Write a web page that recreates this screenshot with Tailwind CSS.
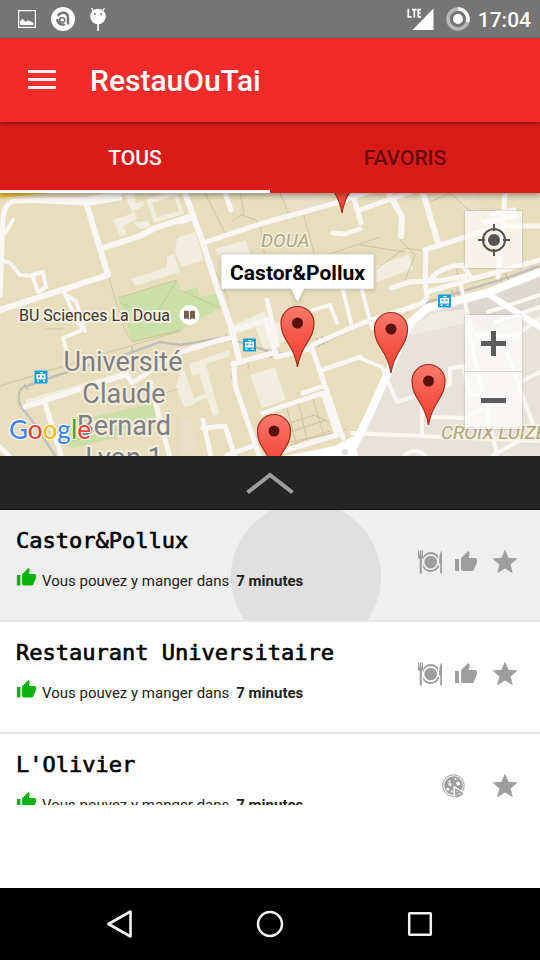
<!DOCTYPE html>
<html lang="fr">
<head>
<meta charset="utf-8">
<meta name="viewport" content="width=device-width, initial-scale=1">
<title>RestauOuTai</title>
<script src="https://cdn.jsdelivr.net/npm/@tailwindcss/browser@4"></script>
</head>
<body class="flex min-h-screen flex-col bg-white font-[Roboto,sans-serif] text-black">

<svg class="hidden" aria-hidden="true">
  <symbol id="thumb" viewBox="0 0 24 24"><path d="M1 21h4V9H1v12zm22-11c0-1.1-.9-2-2-2h-6.31l.95-4.57.03-.32c0-.41-.17-.79-.44-1.06L14.17 1 7.59 7.59C7.22 7.95 7 8.45 7 9v10c0 1.1.9 2 2 2h9c.83 0 1.54-.5 1.84-1.22l3.02-7.05c.09-.23.14-.47.14-.73z"/></symbol>
  <symbol id="star" viewBox="0 0 24 24"><path d="M12 17.27 18.18 21l-1.64-7.03L22 9.24l-7.19-.61L12 2 9.19 8.63 2 9.24l5.46 4.73L5.82 21z"/></symbol>
  <symbol id="plate" viewBox="0 0 24 24">
    <path d="M0 .5h1.200v5h.6v-5h1.300v5h.6v-5h1.300V7c0 1.200-.5 1.800-1.200 2.200V23.500H1.700V9.200C.6 8.800 0 8.200 0 7z"/>
    <path d="M24 .5v23h-1.800V13.500h-1.100C21.100 8 21.600 2.500 24 .5z"/>
    <circle cx="12.700" cy="12" r="6.300"/>
    <path d="M5.300 6.300C7 3.500 9.800 2 12.700 2c2.900 0 5.600 1.300 7.500 3.700l-.6 3.200A7.500 7.500 0 0 0 5.300 10zM5.300 14a7.500 7.500 0 0 0 14.300 1.300h1.300v2A9.900 9.900 0 0 1 12.700 22c-3 0-5.700-1.500-7.400-4z"/>
  </symbol>
  <symbol id="pizza" viewBox="0 0 24 24">
    <path fill="none" stroke="currentColor" stroke-width="1" d="M20.500 17.300A10.700 10.700 0 1 0 12 22.300"/>
    <path fill-rule="evenodd" d="M11.500 2.300a9.300 9.300 0 0 1 7.900 14.200L11.500 11.600v9.300a9.300 9.300 0 0 1 0-18.600zM12.500 4.200v1.600h1.800V4.200zM6.500 6.500v1.800h2V6.500zM15.300 7.600l-1.300 1.400.8 2 2 .5 1.500-1.200-.8-2.100zM6 9.600l.8 1.800 2 .8.900-1.600-1-1.500zM4.300 14v2.500h2.800V14zM8.700 16.500v2h1.800v-2z"/>
    <path fill-rule="evenodd" d="M12.800 13.800l8.700 5.400c-1.700 2.700-4.700 4.200-8.200 4.200zM14.500 16.500v1.600h1.600zM16 19.300v1.300h1.500v-1.300zM18.300 20.600l1.500-1.200-1-.5zM14.200 20.300v1.200h1.200z"/>
  </symbol>
</svg>

<div class="flex h-[38px] shrink-0 items-center bg-[#757575] px-[9px] text-white">
  <div class="flex flex-1 items-center gap-[15px] pl-[9px]">
    <svg class="size-[18px]" viewBox="0 0 18 18" aria-label="Image"><path fill="none" stroke="#fff" stroke-width="1.200" d="M.6.600h16.800v16.800H.6z"/><path fill="#fff" d="M2 15v-3.500l2.500-2.800 3 3.300 2-1.500 2.500.5 3.500 2V15z"/></svg>
    <svg class="size-6" viewBox="0 0 24 24" aria-label="Avast"><circle cx="12" cy="12" r="12" fill="#fff"/><path fill="none" stroke="#757575" stroke-width="2.400" d="M6.800 8.800Q9 5.600 12.500 5.800 17 6.200 17 11v6.500M13.600 16.800Q12.300 18 10.600 17.500 6.200 16.300 6.300 12"/><ellipse cx="11.200" cy="13" rx="2.600" ry="2.200" fill="none" stroke="#757575" stroke-width="1.500"/></svg>
    <svg class="h-6 w-4" viewBox="0 0 16 24" aria-label="Android"><path fill="none" stroke="#fff" stroke-width="1.300" d="M1.500 1l2 3M14.500 1l-2 3"/><circle cx="8" cy="9.500" r="7.800" fill="#fff"/><circle cx="4.800" cy="7" r="1" fill="#757575"/><circle cx="11.200" cy="7" r="1" fill="#757575"/><path fill="#fff" d="M7.200 17h1.700v7H7.200z"/></svg>
  </div>
  <svg class="mr-3 h-6 w-7" viewBox="0 0 28 24" aria-label="LTE"><path fill="#fff" d="M27.500 1.500v21.500h-21z"/><path fill="none" stroke="#fff" stroke-width="1.700" d="M2.300 1.800v8h3.200M6 2.600h4.600M8.300 2.600v8M15 2.600h-2.700v7.200H15M12.300 6h2.400"/></svg>
  <svg class="mr-2 size-6" viewBox="0 0 24 24" aria-label="Batterie"><circle cx="12" cy="12" r="10" fill="none" stroke="#b8b8b8" stroke-width="3.500"/><path fill="none" stroke="#fff" stroke-width="3.500" d="M12 2a10 10 0 0 1 9.500 13"/><circle cx="12" cy="12" r="5" fill="#fff"/></svg>
  <span class="pt-px text-[21px] font-medium leading-6">17:04</span>
</div>

<header class="relative z-10 flex h-[84px] shrink-0 items-center bg-[#f12b2a] px-7 text-white shadow-[0_1px_4px_rgba(0,0,0,0.45)]">
  <button type="button" class="mr-[34px]" aria-label="Menu"><svg class="h-5 w-7" viewBox="0 0 28 20"><path fill="#fff" fill-opacity=".93" d="M0 0h28v3H0zM0 8h28v3H0zM0 16h28v3H0z"/></svg></button>
  <h1 class="pt-[2px] text-[30px] font-medium leading-9">RestauOuTai</h1>
</header>

<nav class="relative z-[5] flex h-[71px] shrink-0 bg-[#d91b19] text-[21px] font-medium shadow-[0_2px_6px_rgba(0,0,0,0.4)]">
  <a href="#tous" class="flex flex-1 items-center justify-center border-b-3 border-white pt-[5px] text-white">TOUS</a>
  <a href="#favoris" class="flex flex-1 items-center justify-center pt-[2px] text-[#660c0b]">FAVORIS</a>
</nav>

<section class="relative h-[263px] shrink-0 overflow-hidden bg-[#e8ddbd]" aria-label="Carte">
  <svg class="block size-full" viewBox="0 193 540 263" preserveAspectRatio="xMidYMid slice">
    <defs>
      <linearGradient id="red" x1="0" y1="0" x2="0" y2="1"><stop offset="0" stop-color="#fa7a6c"/><stop offset=".5" stop-color="#f5574a"/><stop offset="1" stop-color="#f0402f"/></linearGradient>
      <g id="pin"><path fill="url(#red)" stroke="#a8281c" stroke-width="1.200" d="M0 0C-1.500-11-5-17-9.500-24-13-29.500-16.500-35-16.500-44a16.500 16.500 0 0 1 33 0C16.500-35 13-29.500 9.500-24 5-17 1.500-11 0 0z"/><circle cy="-44" r="5.500" fill="#5a120c"/></g>
      <g id="tram"><rect x="-6.500" y="-6.500" width="13" height="13" rx="1" fill="#149fec"/><path fill="#fff" d="M-4.500-3h9v5.500h-9zM-1-5h3v1.500h-3zM-4 3.500h2V5h-2zM2 3.500h2V5H2z"/><path fill="#149fec" d="M-3-1.500h2v1.800h-2zM1-1.500h2v1.800H1z"/></g>
    </defs>

    <path fill="#e7e3dc" d="M350 456L410 323 430 306 488 291 540 270V456z"/>
    <path fill="#ddd8d1" d="M440 312l50-16 50-20v30l-50 25z"/>
    <path fill="#efece5" d="M412 326l25-14 32-3-3 14-55 12z"/>
    <path fill="#f2c83c" d="M0 192h58L0 198z"/>
    <path fill="#cbdfa8" d="M118 298l59-18 4 12 16-5 3 10 17-4 4 15-33 17-8 7-48 10z"/>
    <path fill="#cbdfa8" d="M58 428l22-8 73-17 5 25-86 20-14-8z"/>
    <path fill="#ebdfca" d="M284 193l32 0 8 12-34 7zM180 420l10-2 8 30-18 6zM455 193h20l8 20-18 4z"/>

    <g fill="#f1eee0">
      <path d="M113 220l12-4 10-4 2 7-14 7 4 8-7 2zM124 194l10-1 2 10 7-2 1 5-12 6zM132 222l17-1 1 6-10 2z"/>
      <path fill-rule="evenodd" d="M146 199l30-9 8 24-30 9zM152 203l22-7 5 15-22 6z"/>
      <path d="M132 279l35-12 0-10 7-3 6 18-45 14zM177 238l18-6 9 28-22 7-7-14zM215 249l31-9 4 14-29 5zM180 372l4-2 10 28 14-5 1 3-24 12-9-20zM189 364l40-14 1 6-24 8 13 50-6 2-14-42-7 2zM250 375l25-8 11 33-24 8zM233 325l32-14 12 35-13 3-9-22-22 8zM375 267l34-13 4 15-36 13z"/>
      <path d="M25 400l98-28 2 6-99 28zM270 325l12-4 8 18-10 4z"/>
    </g>

    <g fill="none" stroke="#c9bd98" stroke-width=".8">
      <path d="M108 275l16 53 8 14 48-12M118 298l58-18M120 303l35 13 22-36M0 386l90-28 90-27M45 329h18M180 290l40 18M165 393l13-4M60 445l90-25"/>
      <path d="M205 193l20 40M240 193l4 20-12 8M242 215l14 5 5 10 8 55M303 213l12 43M280 193l10 25M375 270l30-22 20 3M400 240l15 15-10 25M360 245l45 7M430 202l20-9 20 18 40 20M327 255l53-18M216 272l13 28"/>
      <path d="M231 375l28 80M242 360q8 0 6 10M286 405l12 45M298 400l10 45M312 396l12 40M284 425l30-10 18 8M290 445l40-14M290 432l36-12M265 447l60-12 22-6M456 265l4 20 35-8"/>
    </g>

    <g fill="none" stroke="#c3bfb8" stroke-width="2.500">
      <path d="M58 460L35 425 20 405Q16 391 24 387L67 372 130 353 160 342 180 345 220 338 245 343 275 354 290 353 322 343 360 325 403 310 460 292 500 280 540 266"/>
      <path stroke-width="1.500" d="M24 384l4 6M132 346v7M226 334l-1 8M271 350v8M317 338l2 9M322 336l2 9M407 306v8M452 290l2 8M457 288l2 8M498 275l4 8M505 273l4 8M532 266l2 8"/>
    </g>

    <g fill="none" stroke="#f8f7f3" stroke-width="5" stroke-linejoin="round" stroke-linecap="round">
      <path d="M0 295L3 218Q4 203 16 201L50 200 85 200 120 193M40 201l50 2 30-5"/>
      <path d="M86 202L108 275 0 310M103 248L140 236 155 228 192 216" stroke-width="6"/>
      <path d="M185 193L203 243 217 287 230 323 240 362" stroke-width="6"/>
      <path d="M203 243L263 223 340 202 370 191M180 222l10-3M360 210L410 192M225 193l6 17M353 195l8 28M333 233l12 1 15-5"/>
      <path d="M390 195L402 217 401 236M423 193L438 243" stroke-width="6"/>
      <path d="M425 250L487 230 500 226 540 226M426 251L425 280 427 297Q425 303 415 306L360 324 312 345M505 193L498 277M492 214l22-4M485 222l30-6"/>
      <path d="M391 288L410 282 445 280 465 276M430 280Q440 266 463 265L470 276M427 292L497 272 540 260"/>
      <path d="M0 260L10 263 20 275 32 276M32 275L43 272 46 287 38 292zM0 237l7-7 6-10M63 290L78 323M68 296l8 5 9 30M80 323l2 7-19 8 4 14" stroke-width="4"/>
      <path d="M25 407L127 374 132 383 180 352 220 340 230 338M45 403L62 458M150 382L170 458M0 447l10 10"/>
      <path d="M267 300L277 345M267 325L276 355M233 330L267 320M276 357L312 348 343 438M233 364L276 352M234 363L235 385 260 458M322 370L360 357M263 413L323 393 337 435 280 452M303 393l18-6M203 420l8 37M203 428l22-2 10 30M227 455l26-9"/>
      <path d="M313 310L330 305 337 323M343 290L352 327M362 290l10 38M298 330l12-4" stroke-width="4"/>
      <path d="M460 282l12 50M360 358L382 367 397 402 450 385 450 368 463 366 470 395 482 395M422 403L422 433M352 433L540 441M432 417L467 418 493 402M467 325L497 455M503 342L535 430M475 335L517 335 540 318M520 382L540 372M493 455L540 430M405 455q10-8 20 0M488 312l52-17M495 322l45-15" stroke-width="4"/>
    </g>
    <path fill="none" stroke="#fff" stroke-width="8" d="M346 462L370 413 410 323 427 308 487 293 545 270"/>
    <path fill="none" stroke="#fff" stroke-width="6" d="M488 294L545 330"/>
    <path fill="#fff" d="M285 456l50-10 18-10 5 20z"/><circle cx="345" cy="452" r="3" fill="#ddd"/>

    <use href="#tram" x="41" y="377"/><use href="#tram" x="249.500" y="345"/><use href="#tram" x="444.500" y="301"/>

    <g fill="#7c7f84" stroke="#f3ecd8" stroke-width="4" stroke-linejoin="round" paint-order="stroke" text-anchor="middle" class="font-[Roboto,sans-serif] text-[27px]">
      <text x="123" y="371">Université</text><text x="124" y="403">Claude</text><text x="124" y="435">Bernard</text><text x="124" y="467">Lyon 1</text>
    </g>
    <text x="19" y="321" fill="#3c3630" stroke="#f5efdf" stroke-width="4" paint-order="stroke" class="font-[Roboto,sans-serif] text-[16px]">BU Sciences La Doua</text>
    <circle cx="189.500" cy="315" r="10" fill="#fff"/><path fill="#795b50" d="M184 311q3-1 5 .5v8q-2-1.500-5-.5zM195 311q-3-1-5 .5v8q2-1.500 5-.5z"/>
    <g fill="#b0a380" stroke="#f5efdf" stroke-width="3" paint-order="stroke" class="font-[Roboto,sans-serif] italic">
      <text x="261" y="247" class="text-[19px]">DOUA</text><text x="441" y="439" class="text-[19px]">CROIX LUIZET</text>
    </g>

    <use href="#pin" x="342" y="213"/><use href="#pin" x="297.500" y="367"/><use href="#pin" x="391" y="373"/><use href="#pin" x="428.500" y="425"/><use href="#pin" x="274" y="475"/>

    <path class="drop-shadow-sm" fill="#fff" stroke="#c9c4b4" stroke-width=".6" d="M221 254h153v35h-70l-6.500 14-6.500-14h-70z"/>
    <text x="297.500" y="280" text-anchor="middle" class="font-[Roboto,sans-serif] text-[21px] font-bold">Castor&amp;Pollux</text>

    <text x="9" y="439" stroke="#fff" stroke-width="2" paint-order="stroke" class="font-[Lato,sans-serif] text-[26px] font-medium"><tspan fill="#4285f4">G</tspan><tspan fill="#ea4335">o</tspan><tspan fill="#fbbc05">o</tspan><tspan fill="#4285f4">g</tspan><tspan fill="#34a853">l</tspan><tspan fill="#ea4335">e</tspan></text>
  </svg>

  <div class="absolute inset-y-0 right-[18px] flex w-[57px] flex-col justify-between pb-[27px] pt-[18px]">
    <button type="button" aria-label="Ma position" class="flex h-[57px] items-center justify-center bg-white/65 shadow-[0_0_2px_rgba(0,0,0,0.3)]">
      <svg class="size-8" viewBox="0 0 32 32" fill="none" stroke="#555" stroke-width="2"><circle cx="16" cy="16" r="11"/><path d="M16 0v7M16 25v7M0 16h7M25 16h7"/><circle cx="16" cy="16" r="6" fill="#555" stroke="none"/></svg>
    </button>
    <div class="flex flex-col divide-y divide-[#d8d6d2] bg-white/70 shadow-[0_0_2px_rgba(0,0,0,0.3)]">
      <button type="button" aria-label="Zoom avant" class="flex h-[57px] items-center justify-center"><svg class="size-[25px]" viewBox="0 0 25 25"><path fill="#5c5c5c" d="M10 0h5v10h10v5H15v10h-5V15H0v-5h10z"/></svg></button>
      <button type="button" aria-label="Zoom arrière" class="flex h-[57px] items-center justify-center"><svg class="size-[25px]" viewBox="0 0 25 25"><path fill="#5c5c5c" d="M0 10h25v5H0z"/></svg></button>
    </div>
  </div>
</section>

<button type="button" aria-label="Agrandir la liste" class="flex h-[54px] w-full shrink-0 items-center justify-center border-b border-[#111] bg-[#242424]">
  <svg class="h-6 w-12" viewBox="0 0 48 24"><path fill="none" stroke="#9e9e9e" stroke-width="4" d="M1.500 21.500L24 4l22.500 17.500"/></svg>
</button>

<ul class="max-h-[295px] shrink-0 overflow-hidden">
  <li class="relative flex h-28 overflow-hidden border-b-2 border-[#e6e6e6] bg-[#efefef] pl-4 pr-5">
    <span class="absolute -top-2 left-[231px] size-[150px] rounded-full bg-[#e0e0e0]"></span>
    <div class="relative flex-1 pt-[17px]">
      <h2 class="font-['DejaVu_Sans_Mono',monospace] text-[22px] leading-7 [-webkit-text-stroke:0.03em_#000]">Castor&amp;Pollux</h2>
      <p class="mt-[14px] flex items-center text-[15px] leading-6 text-[#222]"><svg class="mr-[5px] size-[21px] -translate-y-1 fill-[#0bb30b]"><use href="#thumb"/></svg>Vous pouvez y manger dans<b class="ml-[7px]">7 minutes</b></p>
    </div>
    <div class="relative flex items-center gap-3 self-start fill-[#9e9e9e] pt-[37px] text-[#9e9e9e]">
      <svg class="size-6"><use href="#plate"/></svg><svg class="size-6"><use href="#thumb"/></svg>
      <button type="button" aria-label="Ajouter aux favoris"><svg class="block size-[30px] fill-[#9e9e9e]"><use href="#star"/></svg></button>
    </div>
  </li>
  <li class="relative flex h-28 overflow-hidden border-b-2 border-[#e6e6e6] pl-4 pr-5">
    <div class="relative flex-1 pt-[17px]">
      <h2 class="font-['DejaVu_Sans_Mono',monospace] text-[22px] leading-7 [-webkit-text-stroke:0.03em_#000]">Restaurant Universitaire</h2>
      <p class="mt-[14px] flex items-center text-[15px] leading-6 text-[#222]"><svg class="mr-[5px] size-[21px] -translate-y-1 fill-[#0bb30b]"><use href="#thumb"/></svg>Vous pouvez y manger dans<b class="ml-[7px]">7 minutes</b></p>
    </div>
    <div class="relative flex items-center gap-3 self-start fill-[#9e9e9e] pt-[37px] text-[#9e9e9e]">
      <svg class="size-6"><use href="#plate"/></svg><svg class="size-6"><use href="#thumb"/></svg>
      <button type="button" aria-label="Ajouter aux favoris"><svg class="block size-[30px] fill-[#9e9e9e]"><use href="#star"/></svg></button>
    </div>
  </li>
  <li class="relative flex h-28 overflow-hidden pl-4 pr-5">
    <div class="relative flex-1 pt-[17px]">
      <h2 class="font-['DejaVu_Sans_Mono',monospace] text-[22px] leading-7 [-webkit-text-stroke:0.03em_#000]">L'Olivier</h2>
      <p class="mt-[14px] flex items-center text-[15px] leading-6 text-[#222]"><svg class="mr-[5px] size-[21px] -translate-y-1 fill-[#0bb30b]"><use href="#thumb"/></svg>Vous pouvez y manger dans<b class="ml-[7px]">7 minutes</b></p>
    </div>
    <div class="relative flex items-center gap-6 self-start fill-[#9e9e9e] pt-[37px] text-[#9e9e9e]">
      <svg class="size-6"><use href="#pizza"/></svg>
      <button type="button" aria-label="Ajouter aux favoris"><svg class="block size-[30px] fill-[#9e9e9e]"><use href="#star"/></svg></button>
    </div>
  </li>
</ul>

<footer class="mt-auto flex h-[72px] shrink-0 items-center justify-center gap-[122px] bg-black">
  <button type="button" aria-label="Retour"><svg class="block size-7" viewBox="0 0 28 28"><path fill="none" stroke="#f0f0f0" stroke-width="2.600" stroke-linejoin="round" d="M2.500 14L24.500 1.500v25z"/></svg></button>
  <button type="button" aria-label="Accueil"><svg class="block size-7" viewBox="0 0 28 28"><circle cx="14" cy="14" r="12" fill="none" stroke="#f0f0f0" stroke-width="2.500"/></svg></button>
  <button type="button" aria-label="Applications récentes"><svg class="block size-7" viewBox="0 0 28 28"><rect x="3.200" y="3.200" width="21.600" height="21.600" rx=".5" fill="none" stroke="#f0f0f0" stroke-width="2.500"/></svg></button>
</footer>
</body>
</html>
